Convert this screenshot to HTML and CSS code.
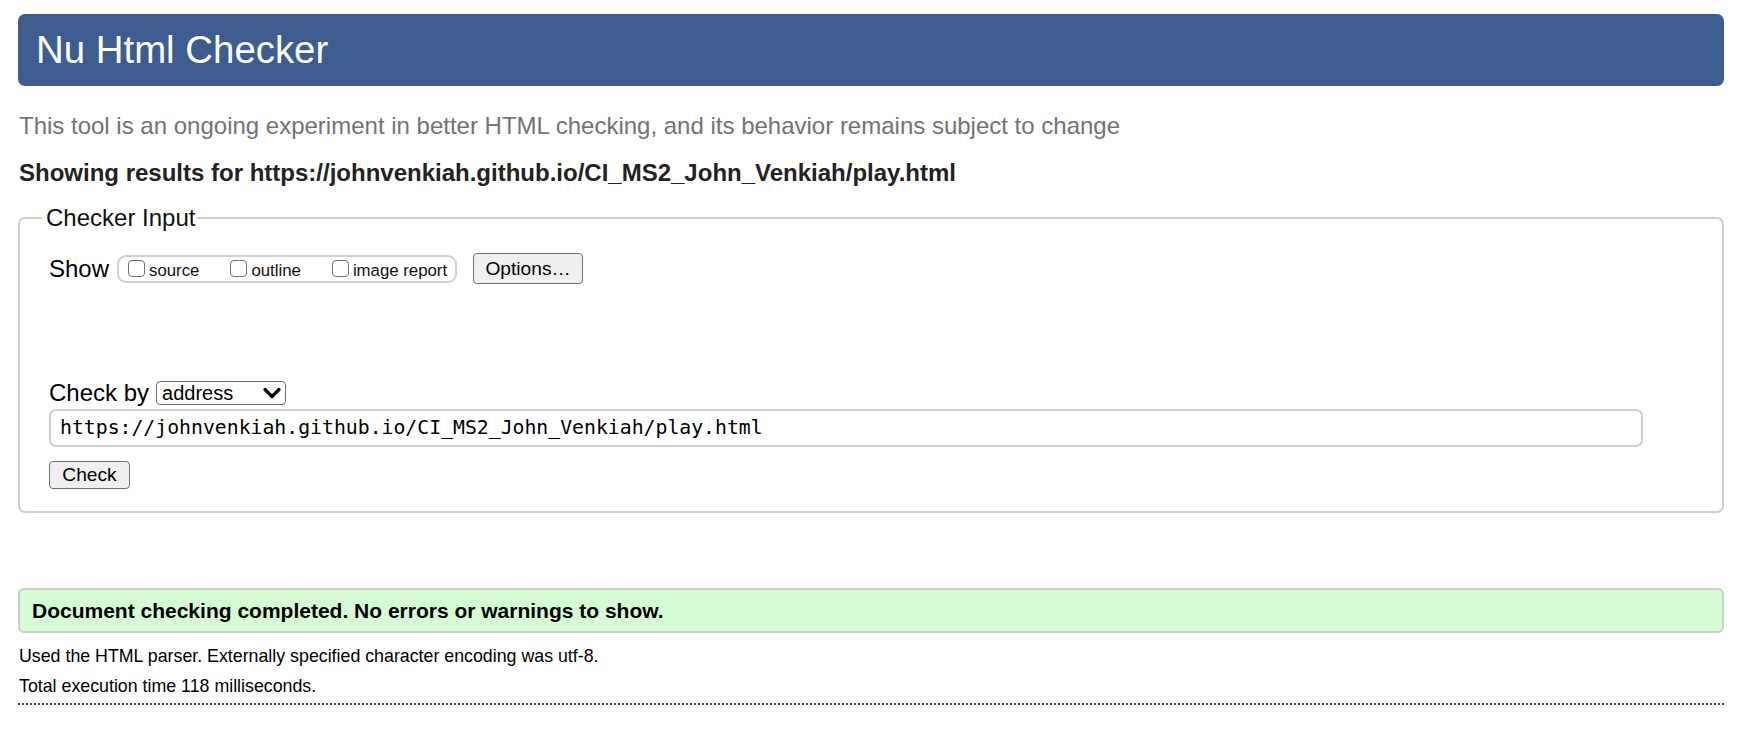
FILE: index.html
```html
<!DOCTYPE html>
<html lang="en">
<head>
<meta charset="utf-8">
<title>Nu Html Checker</title>
<link rel="stylesheet" href="styles.css">
</head>
<body>
<h1 class="banner">Nu Html Checker</h1>
<p class="tagline">This tool is an ongoing experiment in better HTML checking, and its behavior remains subject to change</p>
<p class="showing">Showing results for https://johnvenkiah.github.io/CI_MS2_John_Venkiah/play.html</p>
<fieldset class="checker">
  <legend class="checker-legend">Checker Input</legend>
  <div class="show-row">
    <span class="row-label">Show</span>
    <div class="show-group">
      <label class="opt"><span class="box"></span><span class="opt-text">source</span></label>
      <label class="opt"><span class="box"></span><span class="opt-text">outline</span></label>
      <label class="opt"><span class="box"></span><span class="opt-text">image report</span></label>
    </div>
    <span class="btn btn-options">Options…</span>
  </div>
  <div class="checkby-row">
    <span class="row-label">Check by</span>
    <span class="select">
      <span class="select-text">address</span>
      <svg class="chev" width="20" height="14" viewBox="0 0 20 14"><path d="M3 3.5 L10 10.5 L17 3.5" fill="none" stroke="#000" stroke-width="3.2" stroke-linecap="round" stroke-linejoin="round"/></svg>
    </span>
  </div>
  <div class="url-input">https://johnvenkiah.github.io/CI_MS2_John_Venkiah/play.html</div>
  <div class="check-row"><span class="btn btn-check">Check</span></div>
</fieldset>
<div class="success">Document checking completed. No errors or warnings to show.</div>
<p class="meta">Used the HTML parser. Externally specified character encoding was utf-8.</p>
<p class="meta">Total execution time 118 milliseconds.</p>
<div class="rule"></div>
</body>
</html>
```
FILE: styles.css
```css
html, body {
  margin: 0;
  background: #fff;
}
body {
  padding: 14px 28px 0 18px;
  font-family: "Liberation Sans", Arial, Helvetica, sans-serif;
  font-size: 24px;
  color: #000;
}
.banner {
  margin: 0;
  height: 72px;
  line-height: 72px;
  padding: 0 18px;
  background: #3d5c90;
  color: #fff;
  font-size: 38.4px;
  font-weight: normal;
  border-radius: 7px;
}
.tagline {
  margin: 25px 0 0 1px;
  line-height: 30px;
  color: #737373;
}
.showing {
  margin: 17px 0 0 1px;
  line-height: 30px;
  font-weight: bold;
  color: #222;
}
.checker {
  margin: 15px 0 0 0;
  padding: 0 25px 22px 29px;
  border: 2px solid #cdcdcd;
  border-radius: 7px;
  min-width: 0;
}
.checker-legend {
  margin-left: -7px;
  padding: 0 2px 0 4px;
  line-height: 30px;
  color: #111;
}
.show-row {
  display: flex;
  align-items: center;
  margin-top: 20px;
  height: 31px;
}
.row-label {
  line-height: 30px;
}
.show-group {
  display: flex;
  align-items: center;
  height: 24px;
  margin-left: 8px;
  padding: 0 8px 0 9px;
  border: 2px solid #d0d0d0;
  border-radius: 9px;
  gap: 31px;
}
.opt {
  display: flex;
  align-items: center;
  gap: 4px;
}
.box {
  width: 15px;
  height: 15px;
  border: 1.5px solid #6f6f6f;
  border-radius: 4px;
  background: #fff;
  margin-top: -1px;
}
.opt-text {
  font-size: 16.8px;
  line-height: 20px;
  padding-top: 5px;
  color: #111;
}
.btn {
  display: inline-flex;
  align-items: center;
  justify-content: center;
  box-sizing: border-box;
  background: #efefef;
  border: 1.5px solid #6e6e6e;
  border-radius: 4px;
  font-size: 19.2px;
  color: #000;
}
.btn-options {
  margin-left: 16px;
  width: 110px;
  height: 31px;
}
.checkby-row {
  display: flex;
  align-items: center;
  margin-top: 94px;
  height: 30px;
}
.select {
  display: inline-flex;
  align-items: center;
  justify-content: space-between;
  box-sizing: border-box;
  width: 130px;
  height: 24px;
  margin-left: 7px;
  padding: 0 3px 0 5px;
  border: 1.5px solid #6e6e6e;
  border-radius: 4px;
  background: #fff;
}
.select-text {
  font-size: 20px;
  line-height: 22px;
}
.chev {
  display: block;
}
.url-input {
  margin-top: 1px;
  box-sizing: border-box;
  width: 1594px;
  height: 38px;
  padding: 0 9px;
  border: 2px solid #cfcfcf;
  border-radius: 7px;
  font-family: "DejaVu Sans Mono", "Liberation Mono", monospace;
  font-size: 19.8px;
  line-height: 34px;
  color: #000;
}
.check-row {
  margin-top: 14px;
  display: flex;
}
.btn-check {
  width: 81px;
  height: 28px;
}
.success {
  margin-top: 75px;
  height: 41px;
  line-height: 41px;
  padding: 0 12px;
  border: 2px solid #cccccc;
  border-radius: 6px;
  background: #d6fcd3;
  font-size: 21px;
  font-weight: bold;
  color: #000;
}
.meta {
  margin: 0 0 0 1px;
  font-size: 17.8px;
  line-height: 30px;
  color: #000;
}
.success + .meta {
  margin-top: 8px;
}
.rule {
  margin-top: 2px;
  border-bottom: 2px dotted #444;
}
```
